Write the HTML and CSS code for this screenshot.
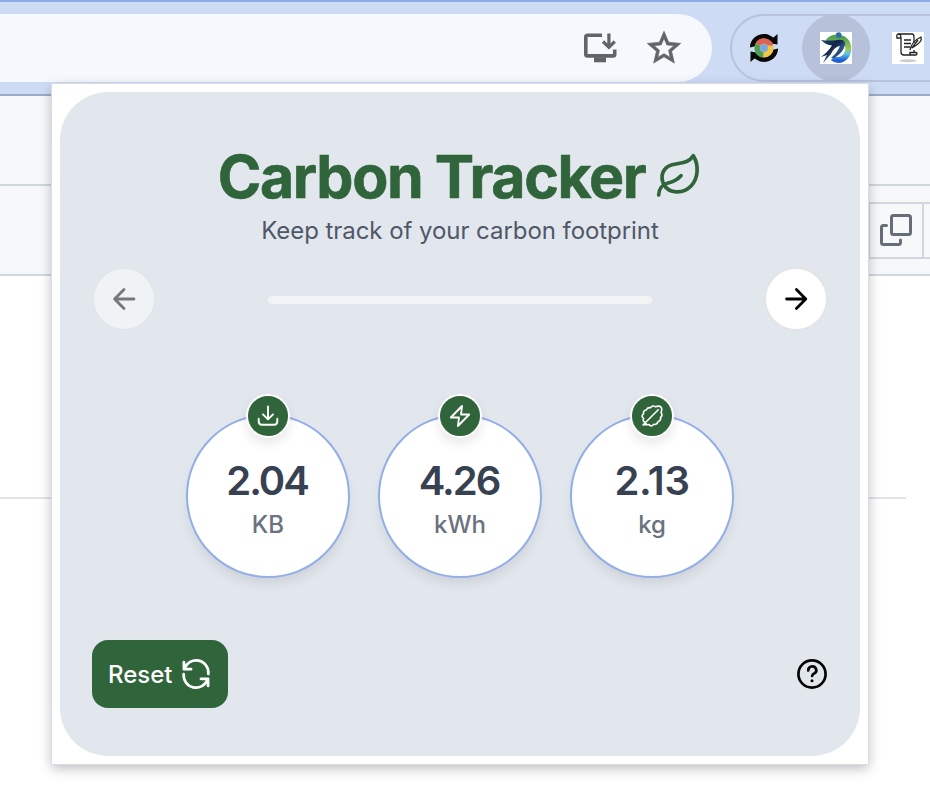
FILE: index.html
```html
<!DOCTYPE html>
<html lang="en">
<head>
<meta charset="utf-8">
<title>Carbon Tracker</title>
<link rel="stylesheet" href="styles.css">
</head>
<body>
<div class="browser">
  <header class="toolbar">
    <div class="address">
      <svg class="icon-install" viewBox="0 0 36 32" fill="none" stroke="#626466" stroke-width="3.6">
        <path d="M20 3.300H5.500Q3.800 3.300 3.800 5V22.200Q3.800 23.900 5.500 23.900H31Q32.700 23.900 32.700 22.200V17.500"/>
        <path d="M12 27.800H24" stroke-width="5"/>
        <path d="M26.900 1.500V14.500M21 9.500L26.900 15.300L32.800 9.500" stroke-width="3.200"/>
      </svg>
      <svg class="icon-star" viewBox="0 0 24 24" fill="#626466" stroke="#626466" stroke-width=".45"><path d="M22 9.24l-7.19-.62L12 2 9.19 8.63 2 9.24l5.46 4.73L5.82 21 12 17.27 18.18 21l-1.63-7.03L22 9.24zM12 15.4l-3.76 2.27 1-4.28-3.32-2.88 4.38-.38L12 6.1l1.71 4.04 4.38.38-3.32 2.88 1 4.28L12 15.4z"/></svg>
    </div>
    <div class="extensions">
      <svg class="ext-chrome" viewBox="0 0 32 32">
        <path d="M2 15.500C2 6 11 .5 20 2.500L25.500 5.500L29.500 2V12.500L20 11L6 14.500ZM30 16.500C30 26 21 31.500 12 29.500L6.500 26.500L2.500 30V19.500L12 21L26 17.500Z" fill="#080808"/>
        <circle cx="16" cy="16" r="9.600" fill="#f3c744"/>
        <path d="M16 16L7.700 11.200A9.600 9.600 0 0 1 25.300 13.500H16Z" fill="#dc6254"/>
        <path d="M16 16L15 25.600A9.600 9.600 0 0 1 7.700 11.200Z" fill="#4c9e58"/>
        <circle cx="16" cy="16" r="4" fill="#76a5e8" stroke="#b7b89d" stroke-width=".6"/>
      </svg>
      <div class="ext-active">
        <svg class="ext-logo" viewBox="0 0 32 32">
          <defs>
            <linearGradient id="ring" x1="0" y1="0" x2="0" y2="1"><stop offset="0" stop-color="#52a050"/><stop offset=".5" stop-color="#9bc956"/><stop offset=".72" stop-color="#5ec3e8"/><stop offset="1" stop-color="#2360d8"/></linearGradient>
            <linearGradient id="body" x1="0" y1="0" x2="1" y2="1"><stop offset="0" stop-color="#1b4577"/><stop offset=".4" stop-color="#142443"/><stop offset=".6" stop-color="#28558c"/><stop offset="1" stop-color="#101d36"/></linearGradient>
          </defs>
          <path fill="#fff" d="M0 0H32V32H0Z"/>
          <path fill="none" stroke="url(#ring)" stroke-width="6" d="M8 10C13 4 23 4 27 11C31 20 25 28 18 28Q15 28 13 26"/>
          <circle cx="18.700" cy="3" r="2.800" fill="#2d69b2"/>
          <path d="M1 8Q9 9 17 8Q26 7 25 13Q23 21 14 26L11 26Q17 21 20 14Q14 15 11 22L3 31L7 23L1 25Q8 20 12 13.500Q6 13 1 8Z" fill="url(#body)"/>
          <path d="M11 23Q13 17 19 14Q18 20 11 25Z" fill="#fff"/>
        </svg>
      </div>
      <svg class="ext-scroll" viewBox="0 0 32 32" fill="none" stroke="#222" stroke-width="1.300">
        <path d="M0 0H32V32H0Z" fill="#fff" stroke="none"/>
        <ellipse cx="16" cy="28.800" rx="8.500" ry="1.500" fill="#ccc" stroke="none"/>
        <path d="M8.500 6H5Q4 2 7 2H20Q22 2 22 5V11M9 6V20Q9 23 12 23H24Q26 21 24 20.500H22V18M9 6Q9 2 6.500 2M19 23Q17 21 18 20.500H22"/>
        <path d="M12 8H19M12 11.500H19M12 15H18M18 18Q20 9 29 5Q31 10 20 16L26 8"/>
      </svg>
    </div>
  </header>
  <main class="page">
    <div class="page-bar"></div>
    <div class="page-tools">
      <div class="tool-group">
        <div class="copy">
          <svg viewBox="0 0 34 34" fill="none" stroke="#656d76" stroke-width="3" stroke-linecap="round">
            <rect x="12.500" y="2.500" width="19" height="19" rx="2"/>
            <path d="M7.500 12.500H4.500Q2.500 12.500 2.500 14.500V29.500Q2.500 31.500 4.500 31.500H19.500Q21.500 31.500 21.500 29.500V27"/>
          </svg>
        </div>
      </div>
    </div>
    <div class="page-section"></div>
  </main>
</div>

<section class="popup">
  <div class="card">
    <div class="heading">
      <h1>Carbon Tracker</h1>
      <svg class="leaf" viewBox="0 0 48 48" fill="none" stroke="#30643a" stroke-width="3.700" stroke-linecap="round" stroke-linejoin="round">
        <path d="M10 34C5.500 25 9 16.500 18 13.800C26 11.500 34 13 39.300 4.700C45 14 44.500 27 37 35C29 43.500 15 42.500 10 34Z"/>
        <path d="M4.700 44C5 36 9 33.500 14 32C20 30.500 23 29 27 24.700"/>
      </svg>
    </div>
    <p class="subtitle">Keep track of your carbon footprint</p>
    <nav class="stepper">
      <button class="step step-off" aria-label="Previous"><svg viewBox="0 0 24 24"><path d="M22 12H2.600M12 2.600L2.600 12L12 21.400"/></svg></button>
      <div class="progress"></div>
      <button class="step" aria-label="Next"><svg viewBox="0 0 24 24"><path d="M2.600 12H21.800M12.400 2.600L21.800 12L12.400 21.400"/></svg></button>
    </nav>
    <div class="stats">
      <div class="stat">
        <span class="badge"><svg viewBox="0 0 24 24"><path d="M12 2.500V15M7 10.300L12 15.300L17 10.300M2.700 14.800V17.500Q2.700 20.700 5.900 20.700H18.100Q21.300 20.700 21.300 17.500V14.800"/></svg></span>
        <strong>2.04</strong><span class="unit">KB</span>
      </div>
      <div class="stat">
        <span class="badge"><svg viewBox="0 0 24 24"><path d="M14 2L2.800 13.500H11L9.900 22L21.200 10.500H13Z"/></svg></span>
        <strong>4.26</strong><span class="unit">kWh</span>
      </div>
      <div class="stat">
        <span class="badge"><svg viewBox="0 0 24 24"><path class="thin" d="M3 21L5.500 18.500L18.200 5.800M5.500 18.500Q2.300 17.500 3.600 14.500Q.5 12 3.600 9.800Q2.800 6.500 6.300 6Q7.500 2.800 10.500 3.800Q12.500 .8 15.500 2.800Q19 1.300 21 3Q22.500 5.500 21 8.500Q23.200 11.500 20.500 13.500Q21.200 16.500 18 17.700Q16.800 21 13.500 20.400Q11 23.300 9 20.600Q6 21.500 5.500 18.500M3.500 20.700H8.500"/></svg></span>
        <strong class="narrow">2.13</strong><span class="unit">kg</span>
      </div>
    </div>
    <footer class="actions">
      <button class="reset">Reset
        <svg viewBox="0 0 32 32" fill="none" stroke="#fff" stroke-width="2.700" stroke-linecap="round" stroke-linejoin="round">
          <path d="M3.900 4V11.200H11.100M4.500 10.500A12.300 12.300 0 0 1 28.300 16M28.100 28V20.800H20.900M27.500 21.500A12.300 12.300 0 0 1 3.700 16"/>
        </svg>
      </button>
      <svg class="help" viewBox="0 0 32 32" fill="none" stroke="#050505" stroke-width="2.700" stroke-linecap="round" stroke-linejoin="round">
        <circle cx="16" cy="16" r="13.600"/>
        <path d="M12.300 12.500A4 3.800 0 1 1 18.500 15.300Q16.200 16.400 16.100 18"/>
        <circle cx="16" cy="22.700" r="1.500" fill="#050505" stroke="none"/>
      </svg>
    </footer>
  </div>
</section>
</body>
</html>
```
FILE: styles.css
```css
* { box-sizing: border-box; }
body { margin: 0; width: 930px; height: 810px; overflow: hidden; background: #fff; font-family: Inter, sans-serif; }
svg { display: block; flex: none; }
button { border: 0; padding: 0; font: inherit; }

.toolbar { display: flex; gap: 18px; height: 96px; padding-top: 12px; background: #cedbf5; border-top: 2px solid #8aabe4; border-bottom: 2px solid #9dabc8; }
.address { display: flex; justify-content: flex-end; align-items: center; gap: 26px; width: 712px; height: 68px; padding-right: 28px; background: #f5f9fe; border-radius: 0 34px 34px 0; flex: none; }
.icon-install { width: 36px; height: 32px; }
.icon-star { width: 40px; height: 40px; }
.extensions { display: flex; align-items: center; width: 240px; height: 68px; padding-left: 16px; border: 2px solid #b8c2dc; border-radius: 34px 0 0 34px; flex: none; }
.ext-chrome { width: 32px; height: 32px; }
.ext-active { display: grid; place-items: center; width: 68px; height: 68px; margin: 0 22px; background: #b7c1da; border-radius: 50%; flex: none; }
.ext-logo, .ext-scroll { width: 32px; height: 32px; }

.page-bar { height: 90px; background: #f6f8fa; border-bottom: 2px solid #d0d7de; }
.page-tools { display: flex; height: 90px; padding: 16px 0 0 868px; background: #f6f8fa; border-bottom: 2px solid #d0d7de; }
.tool-group { flex: 1; height: 57px; border: 2px solid #d0d7de; border-right: 0; }
.copy { width: 54px; height: 53px; padding: 9px 0 0 9px; border-right: 2px solid #d0d7de; }
.copy svg { width: 34px; height: 34px; }
.page-section { width: 906px; height: 223px; border-bottom: 2px solid #dfe2e6; }

.popup { position: absolute; left: 52px; top: 84px; width: 816px; height: 680px; padding: 8px; background: #fff; box-shadow: 0 0 0 1px #d9dce6, 0 4px 12px rgba(0, 0, 0, .28); }
.card { display: flex; flex-direction: column; height: 664px; padding: 49px 32px 47px; background: #e2e7ee; border-radius: 48px; }
.heading { display: flex; justify-content: center; gap: 9px; height: 72px; }
h1 { margin: 0; font-size: 59px; line-height: 71px; font-weight: 700; letter-spacing: -1.400px; color: #30643a; white-space: nowrap; -webkit-text-stroke: .6px #30643a; }
.leaf { width: 48px; height: 48px; margin-top: 10px; }
.subtitle { margin: 0; height: 36px; font-size: 24px; line-height: 36px; letter-spacing: -.06px; color: #4f5768; text-align: center; }
.stepper { display: flex; justify-content: space-between; align-items: center; height: 64px; margin-top: 18px; padding: 0 2px; }
.step { display: grid; place-items: center; width: 60px; height: 60px; border-radius: 50%; background: #fff; box-shadow: 0 0 0 2px #e3e4e8; color: #000; }
.step-off { background: #f0f3f6; box-shadow: 0 0 0 2px #e2e6ea; color: #777779; }
.step svg { width: 24px; height: 24px; fill: none; stroke: currentColor; stroke-width: 2.800; stroke-linecap: round; stroke-linejoin: round; }
.progress { width: 384px; height: 8px; margin-top: 2px; border-radius: 4px; background: #f2f3f5; }
.stats { display: flex; justify-content: center; gap: 28px; margin-top: 83px; }
.stat { position: relative; display: flex; flex-direction: column; align-items: center; width: 164px; height: 164px; padding-top: 41px; border: 2px solid #92adea; border-radius: 50%; background: #fff; box-shadow: 0 8px 12px -2px rgba(0, 0, 0, .09); }
.badge { position: absolute; left: 58px; top: -22px; display: grid; place-items: center; width: 44px; height: 44px; border: 2px solid #fff; border-radius: 50%; background: #30643a; box-shadow: 0 6px 12px rgba(0, 0, 0, .09); }
.badge svg { width: 24px; height: 24px; fill: none; stroke: #fff; stroke-width: 1.900; stroke-linecap: round; stroke-linejoin: round; }
.badge .thin { stroke-width: 1.600; }
strong { margin-left: -2px; font-size: 40px; line-height: 48px; font-weight: 600; letter-spacing: -2px; color: #374151; }
.narrow { margin-left: 0; letter-spacing: -.4px; }
.unit { margin-top: 2px; font-size: 24px; line-height: 36px; font-weight: 500; color: #6b7280; }
.actions { display: flex; justify-content: space-between; align-items: center; margin-top: 62px; }
.reset { display: flex; align-items: center; justify-content: space-between; width: 136px; height: 68px; padding: 0 16px; border-radius: 16px; background: #30643a; color: #fff; font-size: 24px; font-weight: 500; }
.reset svg, .help { width: 32px; height: 32px; }
```
